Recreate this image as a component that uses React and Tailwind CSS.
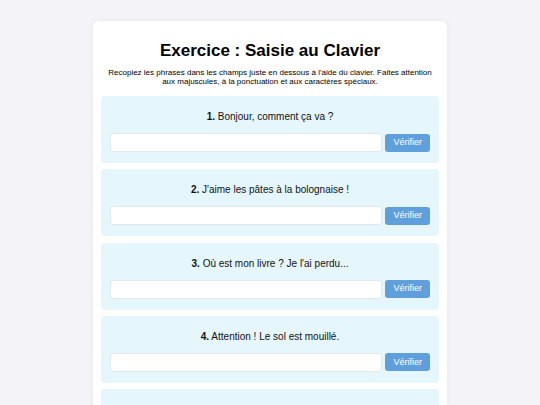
import { useState } from "react";

const phrases = [
  "Bonjour, comment ça va ?",
  "J'aime les pâtes à la bolognaise !",
  "Où est mon livre ? Je l'ai perdu...",
  "Attention ! Le sol est mouillé.",
  "Il fait beau aujourd'hui.",
];

function Exercise({ index, text }) {
  const [value, setValue] = useState("");
  return (
    <div className="bg-[#e6f6fd] rounded-[4px] px-[9px] pt-[14px] pb-[11px]">
      <p className="text-center text-[10px] leading-[13px] text-[#111] mb-[10px]">
        <strong>{index}.</strong> {text}
      </p>
      <div className="flex items-center gap-[3px]">
        <input
          value={value}
          onChange={(e) => setValue(e.target.value)}
          className="flex-1 h-[19px] bg-white border border-[#e2e8ee] rounded-[3px] px-1 text-[9px] outline-none"
        />
        <button className="h-[18px] px-[8px] bg-[#5fa0dc] text-white text-[9px] rounded-[3px]">
          Vérifier
        </button>
      </div>
    </div>
  );
}

export default function App() {
  return (
    <div className="min-h-screen bg-[#f3f3f8] pt-[21px] font-['Liberation_Sans',Arial,sans-serif]">
      <div className="w-[354px] mx-auto bg-white rounded-[6px] shadow-[0_0_6px_rgba(0,0,0,0.06)] px-[8px] pt-[20px] pb-[8px]">
        <h1 className="text-center text-[17px] font-bold leading-[20px] text-black">
          Exercice : Saisie au Clavier
        </h1>
        <p className="text-center text-[8px] leading-[9px] text-black mt-[7px] mb-[10px] px-[4px]">
          Recopiez les phrases dans les champs juste en dessous à l'aide du clavier. Faites attention aux majuscules, à la ponctuation et aux caractères spéciaux.
        </p>
        <div className="flex flex-col gap-[6.3px]">
          {phrases.map((p, i) => (
            <Exercise key={i} index={i + 1} text={p} />
          ))}
        </div>
      </div>
    </div>
  );
}
